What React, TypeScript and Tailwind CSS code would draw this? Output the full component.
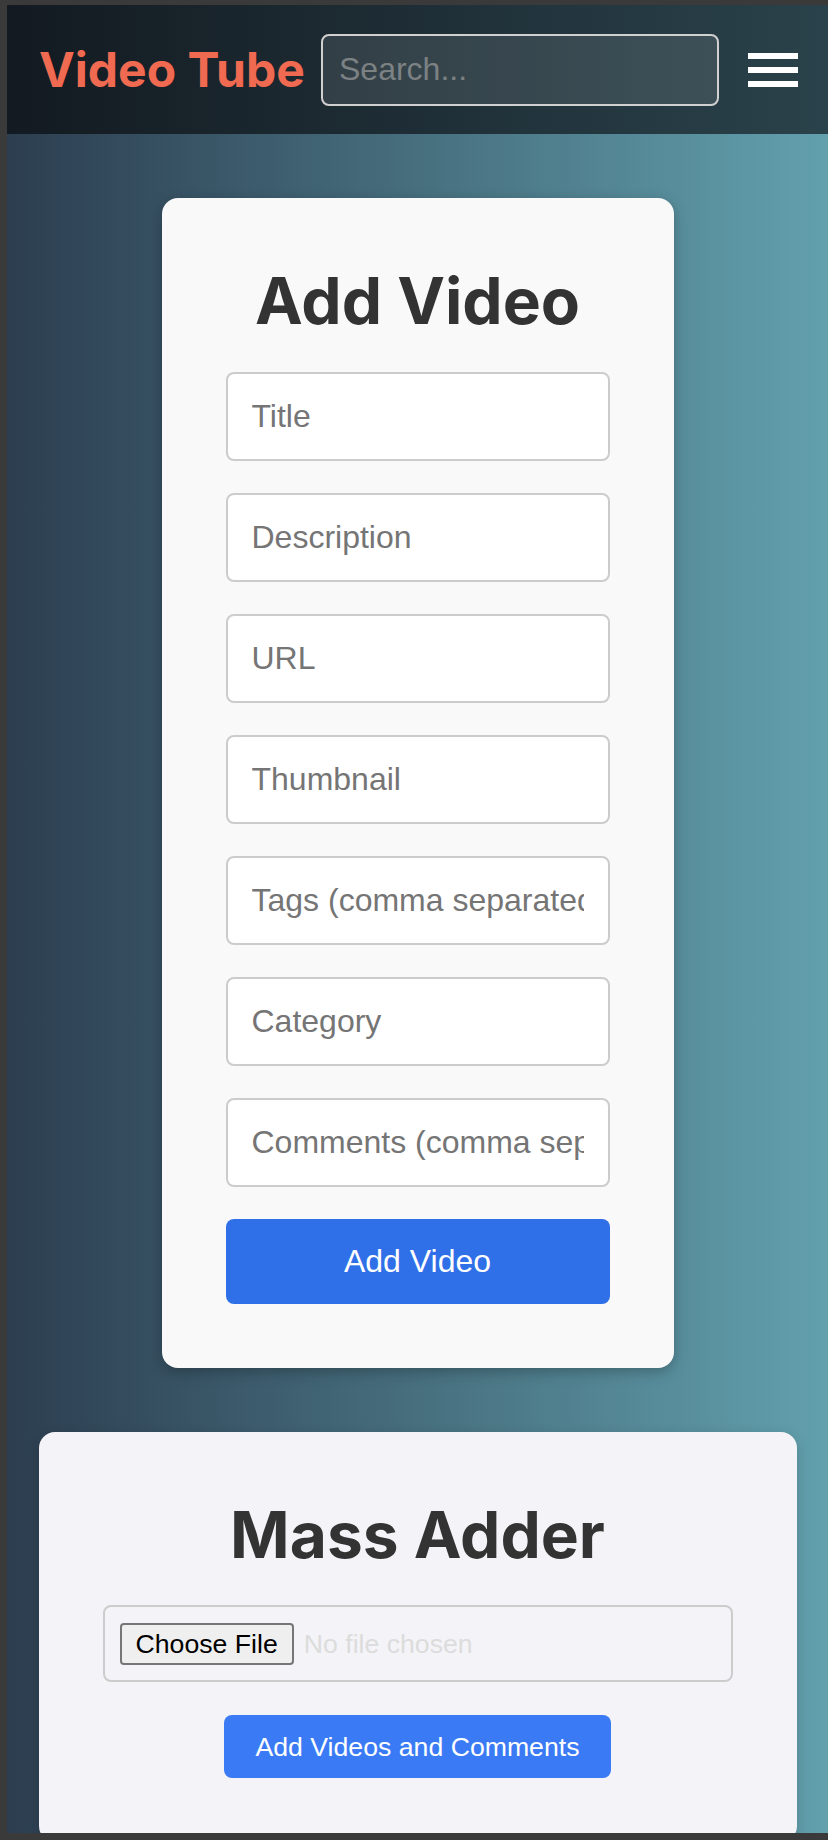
import React from "react";

const fields = [
  "Title",
  "Description",
  "URL",
  "Thumbnail",
  "Tags (comma separated)",
  "Category",
  "Comments (comma separated)",
];

export default function App() {
  return (
    <div className="w-[828px] h-[1840px] bg-[#3a3a3a] pt-[5px] pl-[7px] pb-[7px] overflow-hidden">
      <div className="h-[1828px] w-[821px] overflow-hidden bg-[linear-gradient(to_right,#2c3e50,#62a0ad)] font-['Liberation_Sans',Arial,sans-serif]">
        <header className="h-[129px] flex items-center pl-[32px] pr-[30px] bg-[linear-gradient(to_right,#131a21,#2a424b)]">
          <div className="w-[264px] whitespace-nowrap font-['Inter',sans-serif] font-bold text-[48px] leading-none text-[#ef6a50]">
            Video Tube
          </div>
          <input
            placeholder="Search..."
            className="ml-[18px] w-[398px] h-[72px] px-[16px] rounded-[8px] border-2 border-[#d0d0d0] bg-[rgba(255,255,255,0.1)] text-[32px] text-white placeholder:text-[#7c8184] outline-none"
          />
          <div className="ml-auto flex flex-col gap-[8px]">
            <span className="block w-[50px] h-[6px] bg-white" />
            <span className="block w-[50px] h-[6px] bg-white" />
            <span className="block w-[50px] h-[6px] bg-white" />
          </div>
        </header>

        <main className="flex flex-col items-center pt-[64px]">
          <section className="w-[512px] rounded-[16px] bg-[#f9f9f9] px-[64px] py-[64px] shadow-[0_4px_14px_rgba(0,0,0,0.25)]">
            <h1 className="text-center font-['Inter',sans-serif] font-bold text-[64px] leading-[77.5px] text-[#333333] mb-[32px] whitespace-nowrap">
              Add Video
            </h1>
            <div className="flex flex-col gap-[32px]">
              {fields.map((f) => (
                <input
                  key={f}
                  placeholder={f}
                  className="w-full h-[89px] px-[24px] rounded-[8px] border-2 border-[#cccccc] bg-white text-[32px] text-[#333] placeholder:text-[#757575] outline-none"
                />
              ))}
              <button className="w-full h-[85px] rounded-[8px] bg-[#2f6fe8] text-white text-[32px]">
                Add Video
              </button>
            </div>
          </section>

          <section className="mt-[64px] w-[758px] rounded-[16px] bg-[#f4f4f8] px-[64px] pt-[64px] pb-[64px] flex flex-col items-center shadow-[0_4px_14px_rgba(0,0,0,0.15)]">
            <h2 className="text-center font-['Inter',sans-serif] font-bold text-[64px] leading-[77.5px] text-[#333333] mb-[32px] whitespace-nowrap">
              Mass Adder
            </h2>
            <div className="w-full h-[77px] rounded-[8px] border-2 border-[#cccccc] flex items-center px-[15px]">
              <span className="h-[42px] px-[14px] flex items-center rounded-[4px] border-2 border-[#767676] bg-[#efefef] text-[26.67px] text-black whitespace-nowrap">
                Choose File
              </span>
              <span className="ml-[10px] text-[26.67px] text-[#dcdcdc] whitespace-nowrap">
                No file chosen
              </span>
            </div>
            <button className="mt-[33px] h-[63px] px-[31px] rounded-[8px] bg-[#3a7bf5] text-white text-[26.67px] whitespace-nowrap">
              Add Videos and Comments
            </button>
          </section>
        </main>
      </div>
    </div>
  );
}
